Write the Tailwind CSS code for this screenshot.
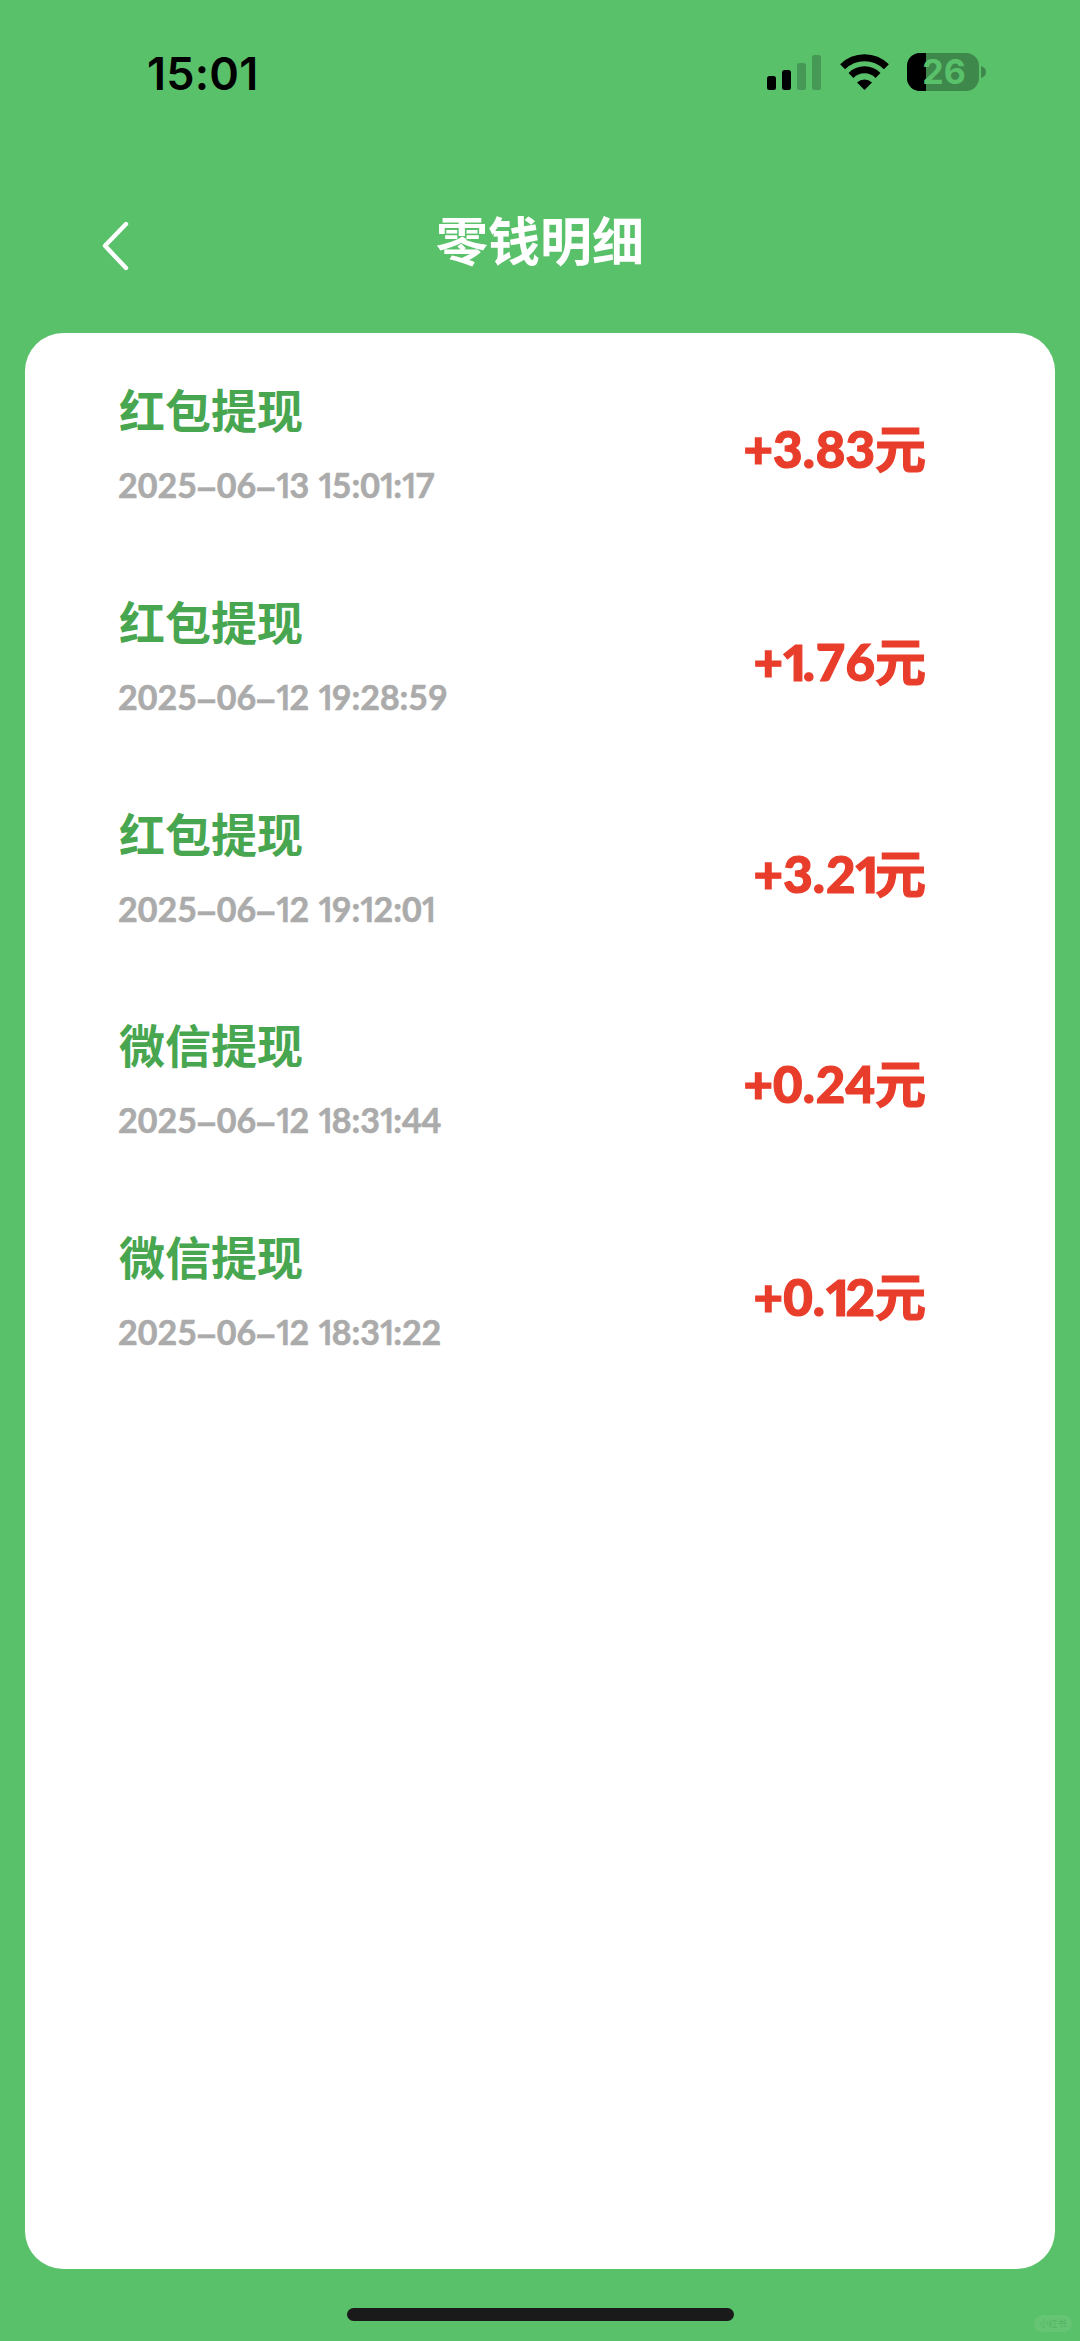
<!DOCTYPE html>
<html lang="zh-CN">
<head>
<meta charset="utf-8">
<title>零钱明细</title>
<script src="https://cdn.jsdelivr.net/npm/@tailwindcss/browser@4"></script>
</head>
<body class="bg-[#5ac16b]">
<div class="relative flex h-[2341px] w-[1080px] flex-col overflow-hidden bg-[#5ac16b] font-['Lato','Noto_Sans_CJK_SC',sans-serif]">
  <div class="flex h-[145px] items-start justify-between pr-[94px] pl-[147px]">
    <div class="mt-[47px] font-['Inter',sans-serif] text-[45px] leading-[54px] font-semibold tracking-[0.2px] text-black">15:01</div>
    <div class="mt-[53px] flex h-[38px]">
      <svg class="h-[38px] w-[56px]" viewBox="0 0 56 38">
        <rect x="1" y="23" width="9" height="14" rx="2.5"/>
        <rect x="16" y="17" width="9" height="20" rx="2.5"/>
        <g fill="#469857"><rect x="31" y="10" width="9" height="27" rx="2.5"/><rect x="46" y="2" width="9" height="35" rx="2.5"/></g>
      </svg>
      <svg class="ml-[18px] h-[38px] w-[49px]" viewBox="0 0 49 38" fill="none" stroke="#000" stroke-width="7">
        <path d="M2.6 13.8A31 31 0 0 1 46.4 13.8"/>
        <path d="M11 22.4A19.2 19.2 0 0 1 38 22.4"/>
        <path d="M24.500 37L17 29.500A10.700 10.700 0 0 1 32 29.500Z" fill="#000" stroke="none"/>
      </svg>
      <div class="relative ml-[18px] flex h-[38px] w-[72px] items-center justify-center rounded-[13px] bg-[#3f884c]">
        <div class="absolute inset-y-0 left-0 w-[19px] rounded-l-[13px] bg-black"></div>
        <span class="relative pl-[2px] font-['Inter',sans-serif] text-[34px] leading-[38px] font-bold text-[#5ac16b]">26</span>
      </div>
      <svg class="mt-[13px] ml-[2px] h-[12px] w-[5px]" viewBox="0 0 5 12"><path d="M0 0Q5 1.500 5 6T0 12Z" fill="#3f884c"/></svg>
    </div>
  </div>
  <header class="grid h-[188px] grid-cols-[1fr_auto_1fr] items-start">
    <svg class="mt-[72px] ml-[100px] h-[58px] w-[32px]" viewBox="0 0 32 58" fill="none" stroke="#fff" stroke-width="4.4" stroke-linecap="round" stroke-linejoin="round"><path d="M26 7L5 28.800L26 51"/></svg>
    <h1 class="mt-[60px] text-[52px] leading-[72px] font-bold text-white">零钱明细</h1>
  </header>
  <main id="list" class="mx-[25px] h-[1936px] rounded-[38px] bg-white pt-[46px]"></main>
  <div class="mx-auto mt-[39px] h-[13px] w-[387px] rounded-full bg-[#1a1a1a]"></div>
  <div class="absolute right-[8px] bottom-[9px] flex h-[17px] w-[38px] items-center justify-center rounded-full bg-[#66c475] text-[9px] leading-none text-[#54b565]">小红书</div>
</div>
<script>
const records = [
  ['红包提现', '2025–06–13 15:01:17', '+3.83'],
  ['红包提现', '2025–06–12 19:28:59', '+1.76'],
  ['红包提现', '2025–06–12 19:12:01', '+3.21'],
  ['微信提现', '2025–06–12 18:31:44', '+0.24'],
  ['微信提现', '2025–06–12 18:31:22', '+0.12'],
];
// A narrow "1" without a foot, and a slightly widened dash and point.
const wrap = (s, map) => [...s].map(c => map[c] ? `<span class="${map[c]}">${c}</span>` : c).join('');
const date = s => wrap(s, {
  '1': "-ml-[2px] font-['Open_Sans'] font-semibold tracking-[-4.2px]",
  '–': "font-['Liberation_Sans'] tracking-[1px]",
  ' ': 'tracking-[1px]',
});
const sum = s => wrap(s, {
  '1': "-ml-[2.5px] font-['Open_Sans'] font-bold tracking-[-7.2px]",
  '.': 'tracking-[1px]',
});
document.getElementById('list').innerHTML = records.map(([t, d, a]) => `
  <section class="flex h-[211.75px] justify-between pr-[129px] pl-[93px]">
    <div>
      <h2 class="pl-px text-[46px] leading-[64px] font-bold text-[#47a64f]">${t}</h2>
      <p class="mt-[20px] text-[34px] leading-[44px] font-bold whitespace-nowrap text-[#ababab] [-webkit-text-stroke:0.6px_#ababab]">${date(d)}</p>
    </div>
    <p class="mt-[38px] text-[51px] leading-[64px] font-black whitespace-nowrap text-[#e93d2b] [-webkit-text-stroke:1.2px_#e93d2b]">${sum(a)}<span class="font-bold">元</span></p>
  </section>`).join('');
</script>
</body>
</html>
